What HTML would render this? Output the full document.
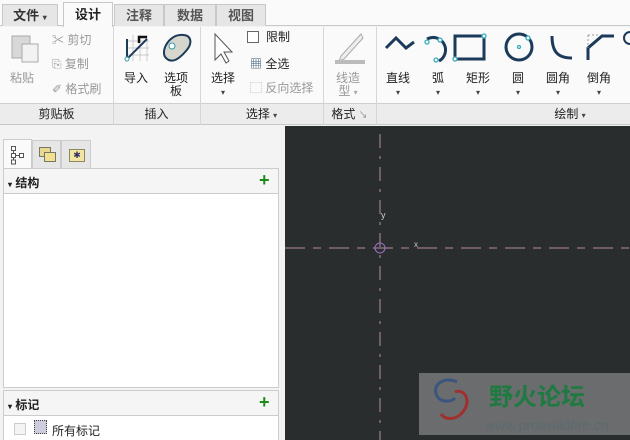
<!DOCTYPE html>
<html><head><meta charset="utf-8"><style>
*{margin:0;padding:0;box-sizing:border-box}
body{width:630px;height:440px;overflow:hidden;background:#f3f3f3;font-family:"Liberation Sans","Noto Sans CJK SC",sans-serif;font-size:12px;color:#222;position:relative}
.a{position:absolute}
.g{color:#999}
.tab{position:absolute;top:4px;height:22px;background:#e6e6e6;border:1px solid #c8c8c8;border-bottom:none;text-align:center;line-height:21px;font-weight:bold;color:#555;font-size:13px}
.lbl{position:absolute;font-size:12px;text-align:center;line-height:13px}
.arr{font-size:8px;color:#444}
</style></head><body>
<div class="a" style="left:0;top:0;width:630px;height:26px;background:#fafafa;border-bottom:1px solid #c8c8c8"></div>
<div class="tab" style="left:2px;width:56px;color:#333">文件 <span class="arr">▾</span></div>
<div class="tab" style="left:63px;width:50px;top:2px;height:25px;background:#fafafa;color:#222;line-height:24px">设计</div>
<div class="tab" style="left:114px;width:50px">注释</div>
<div class="tab" style="left:164px;width:52px">数据</div>
<div class="tab" style="left:216px;width:50px">视图</div>
<div class="a" style="left:0;top:27px;width:630px;height:76px;background:#fafafa"></div>
<div class="a" style="left:0;top:103px;width:630px;height:22px;background:#ececec;border-top:1px solid #d0d0d0;border-bottom:1px solid #c8c8c8"></div>
<div class="a" style="left:113px;top:27px;width:1px;height:98px;background:#d6d6d6"></div>
<div class="a" style="left:200px;top:27px;width:1px;height:98px;background:#d6d6d6"></div>
<div class="a" style="left:323px;top:27px;width:1px;height:98px;background:#d6d6d6"></div>
<div class="a" style="left:376px;top:27px;width:1px;height:98px;background:#d6d6d6"></div>
<div class="lbl" style="left:0;width:113px;top:108px">剪贴板</div>
<div class="lbl" style="left:113px;width:87px;top:108px">插入</div>
<div class="lbl" style="left:200px;width:123px;top:108px">选择 <span class="arr">▾</span></div>
<div class="lbl" style="left:323px;width:53px;top:108px">格式 <span style="font-size:9px;color:#888">↘</span></div>
<div class="lbl" style="left:540px;width:60px;top:108px">绘制 <span class="arr">▾</span></div>
<svg class="a" style="left:10px;top:32px" width="32" height="32"><rect x="2" y="4" width="18" height="22" fill="#d8d8d8" stroke="#aaa"/><rect x="12" y="12" width="16" height="18" fill="#f2f2f2" stroke="#aaa"/></svg>
<div class="lbl g" style="left:10px;top:72px">粘贴</div>
<div class="lbl g" style="left:52px;top:34px">✂ 剪切</div>
<div class="lbl g" style="left:52px;top:58px">⎘ 复制</div>
<div class="lbl g" style="left:52px;top:83px">✐ 格式刷</div>
<svg class="a" style="left:123px;top:31px" width="30" height="32"><g stroke="#bbb" stroke-width=".7"><path d="M4 10h22M4 17h22M4 24h22M10 4v26M17 4v26M24 4v26"/></g><path d="M4 8v20L24 8" fill="none" stroke="#1c3b5a" stroke-width="2"/><path d="M16 12v-6h8" fill="none" stroke="#111" stroke-width="2.5"/><circle cx="4" cy="28" r="2" fill="#fff" stroke="#39a"/></svg>
<div class="lbl" style="left:124px;top:72px">导入</div>
<svg class="a" style="left:160px;top:32px" width="34" height="30"><path d="M6 26C0 20 8 4 20 3s13 8 6 16-14 13-20 7z" fill="#d6d6cc" stroke="#1c3b5a" stroke-width="2"/><circle cx="12" cy="14" r="3" fill="#fff" stroke="#39a"/></svg>
<div class="lbl" style="left:164px;top:72px">选项<br>板</div>
<svg class="a" style="left:212px;top:32px" width="24" height="32"><path d="M3 2v26l6-6 5 9 3-2-5-9h8z" fill="#fff" stroke="#555"/></svg>
<div class="lbl" style="left:211px;top:72px">选择<br><span class="arr">▾</span></div>
<div class="a" style="left:247px;top:31px;width:12px;height:12px;border:1px solid #666;background:#fff"></div>
<div class="lbl" style="left:266px;top:31px">限制</div>
<div class="lbl" style="left:250px;top:58px"><span style="color:#357">▦</span> 全选</div>
<div class="lbl g" style="left:250px;top:82px">⬚ 反向选择</div>
<svg class="a" style="left:333px;top:32px" width="32" height="32"><path d="M28 2L8 24l-2 5 5-2L30 6z" fill="#eee" stroke="#aaa"/><rect x="2" y="28" width="30" height="4" fill="#bbb"/></svg>
<div class="lbl g" style="left:336px;top:72px">线造<br>型 <span class="arr" style="color:#aaa">▾</span></div>
<svg class="a" style="left:384px;top:30px" width="246" height="36" fill="none" stroke="#1c3b5a" stroke-width="3">
<path d="M2 18l10-10 10 10 8-6"/>
<path d="M43 9a11 11 0 0 1 12 22"/>
<path d="M71 6h29v23h-29z"/>
<circle cx="135" cy="17" r="13"/>
<path d="M168 6c0 16 6 22 20 22"/>
<path d="M204 30V18L218 6h12"/>
<g stroke="#3ab" stroke-width="1.3" fill="#fff"><circle cx="43" cy="12" r="2"/><circle cx="56" cy="10" r="2"/><circle cx="52" cy="30" r="2"/><circle cx="71" cy="29" r="2"/><circle cx="100" cy="6" r="2"/><circle cx="144" cy="8" r="2"/><circle cx="135" cy="17" r="1.5"/></g>
<path d="M204 5h12M204 5v13" stroke="#999" stroke-width="1" stroke-dasharray="2 2"/>
<circle cx="246" cy="8" r="6" stroke-width="2"/>
</svg>
<div class="lbl" style="left:386px;top:72px">直线<br><span class="arr">▾</span></div>
<div class="lbl" style="left:432px;top:72px">弧<br><span class="arr">▾</span></div>
<div class="lbl" style="left:466px;top:72px">矩形<br><span class="arr">▾</span></div>
<div class="lbl" style="left:512px;top:72px">圆<br><span class="arr">▾</span></div>
<div class="lbl" style="left:546px;top:72px">圆角<br><span class="arr">▾</span></div>
<div class="lbl" style="left:587px;top:72px">倒角<br><span class="arr">▾</span></div>
<div class="a" style="left:0;top:126px;width:285px;height:314px;background:#f3f3f3"></div>
<div class="a" style="left:3px;top:139px;width:29px;height:30px;background:#fafafa;border:1px solid #ccc;border-bottom:none"><svg class="a" style="left:6px;top:5px" width="16" height="20" fill="#fff" stroke="#555"><rect x="1.5" y="1.5" width="4" height="4"/><rect x="1.5" y="8.5" width="4" height="4"/><rect x="9.5" y="8.5" width="4" height="4"/><rect x="1.5" y="15" width="4" height="4"/><path d="M3.5 5.5v3M5.5 10.5h4M3.5 12.5v2.5" fill="none"/></svg></div>
<div class="a" style="left:32px;top:140px;width:29px;height:28px;background:#e6e6e6;border:1px solid #ccc;border-bottom:none"><div class="a" style="left:6px;top:6px;width:12px;height:10px;background:#e8d890;border:1px solid #776"></div><div class="a" style="left:11px;top:11px;width:12px;height:10px;background:#f0e090;border:1px solid #776"></div></div>
<div class="a" style="left:61px;top:140px;width:30px;height:28px;background:#e6e6e6;border:1px solid #ccc;border-bottom:none"><div class="a" style="left:7px;top:8px;width:16px;height:13px;background:#f4e6a0;border:1px solid #886;font-size:9px;text-align:center;line-height:11px;color:#336">✱</div></div>
<div class="a" style="left:3px;top:168px;width:276px;height:26px;border:1px solid #ccc;background:#f5f5f5"></div>
<div class="a" style="left:8px;top:174px;font-weight:bold;font-size:12px"><span style="font-size:8px">▾</span> 结构</div>
<div class="a" style="left:259px;top:170px;color:#1a8a1a;font-weight:bold;font-size:18px">+</div>
<div class="a" style="left:3px;top:194px;width:276px;height:194px;background:#fff;border:1px solid #ccc;border-top:none"></div>
<div class="a" style="left:3px;top:390px;width:276px;height:26px;border:1px solid #ccc;background:#f5f5f5"></div>
<div class="a" style="left:8px;top:396px;font-weight:bold;font-size:12px"><span style="font-size:8px">▾</span> 标记</div>
<div class="a" style="left:259px;top:392px;color:#1a8a1a;font-weight:bold;font-size:18px">+</div>
<div class="a" style="left:3px;top:416px;width:276px;height:24px;background:#fff;border-left:1px solid #ccc;border-right:1px solid #ccc"></div>
<div class="a" style="left:14px;top:423px;width:12px;height:12px;border:1px solid #ccc;background:#f4f4f4"></div>
<div class="a" style="left:34px;top:420px;width:13px;height:14px;border:1px dotted #444;background:#ccd"></div>
<div class="a" style="left:52px;top:422px;font-size:12px">所有标记</div>
<div class="a" style="left:285px;top:126px;width:345px;height:314px;background:#2a2d2e"></div>
<svg class="a" style="left:285px;top:126px" width="345" height="314">
<line x1="95" y1="8" x2="95" y2="314" stroke="#b88aa8" stroke-width="1" stroke-dasharray="14 8 3 8"/>
<line x1="0" y1="122" x2="345" y2="122" stroke="#b88aa8" stroke-width="1" stroke-dasharray="20 8 8 8"/>
<circle cx="95" cy="122" r="5" fill="none" stroke="#9a70c0"/>
<text x="96" y="92" fill="#ccc" font-size="9" font-family="Liberation Sans">y</text>
<text x="129" y="121" fill="#ccc" font-size="8" font-family="Liberation Sans">x</text>
<rect x="134" y="247" width="211" height="62" fill="#6b6c6e"/>
<path d="M172 256c-12-6-26 2-20 14 4 7 14 6 18 2" fill="none" stroke="#3a5580" stroke-width="3"/>
<path d="M170 266c10-4 18 10 6 22-6 6-16 6-20 0" fill="none" stroke="#a03030" stroke-width="3"/>
<text x="204" y="279" fill="#1e7a40" font-size="24" font-weight="bold" font-family="Noto Sans CJK SC,sans-serif">野火论坛</text>
<text x="200" y="304" fill="#5c6a70" font-size="14" font-family="Liberation Sans">www.proewildfire.cn</text>
</svg>
</body></html>
